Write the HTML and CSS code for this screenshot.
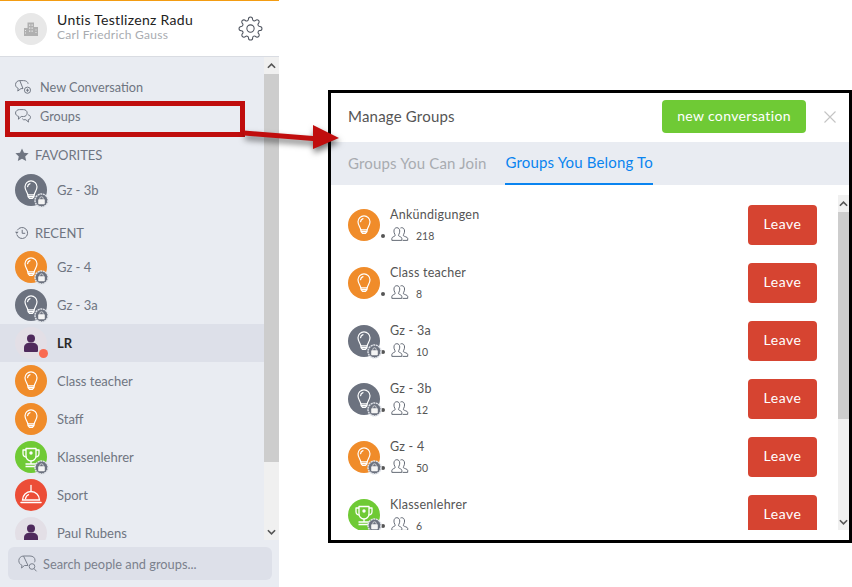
FILE: index.html
```html
<!DOCTYPE html>
<html lang="en">
<head>
<meta charset="utf-8">
<title>Manage Groups</title>
<link rel="stylesheet" href="styles.css">
</head>
<body>
<svg class="defs" width="0" height="0" aria-hidden="true">
  <symbol id="bulb" viewBox="0 0 32 32">
    <g fill="none" stroke="#fff" stroke-width="1.2" stroke-linejoin="round" stroke-linecap="round">
      <path d="M12.800 20.800C12.400 18.200 10 16.400 10 12.800a6 6 0 0 1 12 0c0 3.600-2.400 5.400-2.800 8z"/>
      <path d="M13 20.800v1.800l1.500 1.800h3l1.500-1.800v-1.800M13.200 22.600h5.600"/>
      <path d="M12.600 12.600a3.400 3.400 0 0 1 2.400-3"/>
    </g>
  </symbol>
  <symbol id="trophy" viewBox="0 0 32 32">
    <g fill="none" stroke="#fff" stroke-width="1.3" stroke-linejoin="round">
      <path d="M11 7.500h10v7.500a5 5 0 0 1-10 0z"/>
      <path d="M11 9H8v3.500a3.500 3.500 0 0 0 3.400 3.500M21 9h3v3.500a3.500 3.500 0 0 1-3.400 3.500"/>
      <path d="M16 20v2.500M10.500 23h11M10.500 25.500h11"/>
    </g>
    <circle cx="16" cy="12" r="1.700" fill="#fff"/>
  </symbol>
  <symbol id="cloche" viewBox="0 0 32 32">
    <g fill="none" stroke="#fff" stroke-width="1.3" stroke-linecap="round">
      <path d="M7.500 21a8.500 8.500 0 0 1 17 0z"/>
      <path d="M6 23.400h20" stroke-width="1.500"/>
      <path d="M16 12.500V6.500"/>
      <path d="M10.500 19.500a5.500 5.500 0 0 1 3-3.800"/>
    </g>
  </symbol>
  <symbol id="person" viewBox="0 0 32 32">
    <circle cx="16" cy="11.500" r="4" fill="#4f2a5c"/>
    <path d="M9 24v-3.500c0-3 2.500-4.500 4.500-4.800h5c2 .3 4.500 1.800 4.500 4.800V24a1 1 0 0 1-1 1H10a1 1 0 0 1-1-1z" fill="#4f2a5c"/>
  </symbol>
  <symbol id="lock" viewBox="0 0 15 15">
    <circle cx="7.500" cy="7.500" r="6.500" fill="#6c727f" stroke="#dfe2e8" stroke-width="1.500" stroke-dasharray="2 .6"/>
    <rect x="4.200" y="6.300" width="6.600" height="5" rx=".7" fill="#f4f4f4"/>
    <path d="M5.800 6.500V5.500a1.700 1.700 0 0 1 3.400 0v1" fill="none" stroke="#f4f4f4" stroke-width=".7"/>
  </symbol>
  <symbol id="people" viewBox="0 0 20 16">
    <g fill="none" stroke="#5f6570" stroke-width="1.100" stroke-linejoin="round">
      <path d="M.7 15.300v-2.400c0-1.400 2.900-2 3.700-2.900.3-.5.100-1-.3-1.600C3.400 7.300 3.100 6 3.100 4.600 3.100 2.300 4.500.8 6.400.8s3.300 1.500 3.300 3.800c0 1.400-.3 2.700-1 3.800-.4.600-.6 1.100-.3 1.600.8.900 3.700 1.500 3.700 2.900v2.400z"/>
      <path d="M10.500 1.200c.4-.3.900-.4 1.500-.4 1.900 0 3.200 1.500 3.200 3.800 0 1.400-.3 2.700-1 3.800-.4.600-.6 1.100-.3 1.600.8.900 4.900 1.500 4.900 2.900v2.400h-5.800"/>
    </g>
  </symbol>
  <symbol id="chat-plus" viewBox="0 0 15 13">
    <g fill="none" stroke="#6f7581" stroke-width=".9">
      <path d="M4.500.5h3.500c2.400 0 4.100 1.200 4.300 3M7.500 8H5.600L2.600 10.300l.4-2.500C1.500 7.200.5 6 .5 4.300.5 2 2.300.5 4.500.5z"/>
      <circle cx="11.700" cy="9.500" r="2.900"/>
      <path d="M11.700 8v3M10.200 9.500h3"/>
    </g>
  </symbol>
  <symbol id="chat-double" viewBox="0 0 15 13">
    <g fill="none" stroke="#6f7581" stroke-width=".9">
      <path d="M4.300.5h3.600c2 0 3.500 1.300 3.500 3.200S9.900 7 8 7H5.800L3.200 9.500l.3-2.600C1.800 6.500.5 5.300.5 3.700.5 1.900 2.200.5 4.300.5z"/>
      <path d="M12.300 5.400c1.300.3 2.200 1 2.200 2.300 0 1.200-.9 2.200-2.100 2.300l.2 2.200-2.400-2.200H8L6.800 9"/>
    </g>
  </symbol>
  <symbol id="chat-search" viewBox="0 0 20 18">
    <g fill="none" stroke="#7b818d" stroke-width="1">
      <path d="M5.500 1h6.500c3 0 5 1.700 5 4.200 0 .8-.2 1.500-.6 2.100M10 10.500H6.500l-3 2.500.5-2.700C2.200 9.700.8 7.800.8 5.600.8 3 3 1 5.500 1z"/>
      <circle cx="14" cy="11.500" r="2.800"/>
      <path d="M16 13.600l2.500 2.700"/>
    </g>
  </symbol>
</svg>

<div class="app">
  <aside class="sidebar">
    <header class="profile">
      <div class="avatar org">
        <svg class="org-icon" viewBox="0 0 16 16">
          <path d="M1 7h3.500v8H1zM4.500 1.500h6.500V15H4.500zM11 6h4v9h-4z" fill="#b0b0b0"/>
          <path d="M6 3.500h1.300v1.300H6zM8.500 3.500h1.300v1.300H8.500zM6 6.500h1.300v1.300H6zM8.500 6.500h1.300v1.300H8.500zM6 9.500h1.300v1.300H6zM8.500 9.500h1.300v1.300H8.500zM2 9h1v1H2zM2 11.500h1v1H2zM12.500 8.500h1v1h-1zM12.500 11h1v1h-1z" fill="#e8e8e8"/>
        </svg>
      </div>
      <div class="profile-text">
        <div class="profile-name">Untis Testlizenz Radu</div>
        <div class="profile-sub">Carl Friedrich Gauss</div>
      </div>
      <svg class="gear" viewBox="0 0 24 24" fill="none" stroke="#4d535e" stroke-width="1">
        <circle cx="12" cy="12" r="3.500"/>
        <path d="M19.400 15a1.650 1.650 0 0 0 .33 1.820l.06.06a2 2 0 0 1 0 2.830 2 2 0 0 1-2.830 0l-.06-.06a1.650 1.650 0 0 0-1.820-.33 1.650 1.650 0 0 0-1 1.510V21a2 2 0 0 1-2 2 2 2 0 0 1-2-2v-.09A1.650 1.650 0 0 0 9 19.400a1.650 1.650 0 0 0-1.820.33l-.06.06a2 2 0 0 1-2.830 0 2 2 0 0 1 0-2.830l.06-.06a1.650 1.650 0 0 0 .33-1.820 1.650 1.650 0 0 0-1.510-1H3a2 2 0 0 1-2-2 2 2 0 0 1 2-2h.09A1.650 1.650 0 0 0 4.600 9a1.650 1.650 0 0 0-.33-1.820l-.06-.06a2 2 0 0 1 0-2.830 2 2 0 0 1 2.830 0l.06.06a1.650 1.650 0 0 0 1.820.33H9a1.650 1.650 0 0 0 1-1.510V3a2 2 0 0 1 2-2 2 2 0 0 1 2 2v.09a1.650 1.650 0 0 0 1 1.510 1.650 1.650 0 0 0 1.820-.33l.06-.06a2 2 0 0 1 2.830 0 2 2 0 0 1 0 2.830l-.06.06a1.650 1.650 0 0 0-.33 1.820V9a1.650 1.650 0 0 0 1.510 1H21a2 2 0 0 1 2 2 2 2 0 0 1-2 2h-.09a1.650 1.650 0 0 0-1.510 1z"/>
      </svg>
    </header>

    <div class="side-middle">
      <nav class="side-list">
        <a class="nav-row"><svg class="nav-icon"><use href="#chat-plus"/></svg>New Conversation</a>
        <a class="nav-row"><svg class="nav-icon"><use href="#chat-double"/></svg>Groups</a>

        <div class="section-head head-fav">
          <svg class="head-icon" viewBox="0 0 14 14"><path d="M7 .5l2 4.200 4.600.6-3.400 3.100 1 4.600L7 10.700l-4.200 2.300 1-4.600L.4 5.300 5 4.700z" fill="#6f7581"/></svg>
          FAVORITES
        </div>
        <div class="conv"><div class="avatar slate"><svg class="glyph"><use href="#bulb"/></svg><svg class="lock"><use href="#lock"/></svg></div><span>Gz - 3b</span></div>

        <div class="section-head head-recent">
          <svg class="head-icon" viewBox="0 0 14 14" fill="none" stroke="#6f7581" stroke-width="1"><path d="M2.300 4.300A5.500 5.500 0 1 1 1.800 8.500"/><path d="M7.200 3.800v3.500h3"/><path d="M0 5.800h3.600L1.800 8z" fill="#6f7581" stroke="none"/></svg>
          RECENT
        </div>
        <div class="conv"><div class="avatar orange"><svg class="glyph"><use href="#bulb"/></svg><svg class="lock"><use href="#lock"/></svg></div><span>Gz - 4</span></div>
        <div class="conv"><div class="avatar slate"><svg class="glyph"><use href="#bulb"/></svg><svg class="lock"><use href="#lock"/></svg></div><span>Gz - 3a</span></div>
        <div class="conv active"><div class="avatar user"><svg class="glyph"><use href="#person"/></svg><i class="status"></i></div><span>LR</span></div>
        <div class="conv"><div class="avatar orange"><svg class="glyph"><use href="#bulb"/></svg></div><span>Class teacher</span></div>
        <div class="conv"><div class="avatar orange"><svg class="glyph"><use href="#bulb"/></svg></div><span>Staff</span></div>
        <div class="conv"><div class="avatar green"><svg class="glyph"><use href="#trophy"/></svg><svg class="lock"><use href="#lock"/></svg></div><span>Klassenlehrer</span></div>
        <div class="conv"><div class="avatar red"><svg class="glyph"><use href="#cloche"/></svg></div><span>Sport</span></div>
        <div class="conv"><div class="avatar user"><svg class="glyph"><use href="#person"/></svg></div><span>Paul Rubens</span></div>
      </nav>
      <div class="scrollbar side-scroll">
        <div class="sb-btn"><svg viewBox="0 0 10 6"><path d="M1 5l4-4 4 4" fill="none" stroke="#555" stroke-width="1.800"/></svg></div>
        <div class="sb-thumb"></div>
        <div class="sb-rest"></div>
        <div class="sb-btn"><svg viewBox="0 0 10 6"><path d="M1 1l4 4 4-4" fill="none" stroke="#555" stroke-width="1.800"/></svg></div>
      </div>
    </div>

    <div class="search-wrap">
      <div class="search"><svg class="search-icon"><use href="#chat-search"/></svg>Search people and groups...</div>
    </div>
  </aside>

  <main class="stage">
    <section class="modal">
      <header class="modal-head">
        <h1>Manage Groups</h1>
        <button class="new-btn">new conversation</button>
        <svg class="close" viewBox="0 0 12 12"><path d="M.5.500l11 11M11.500.500l-11 11" stroke="#c4c4c4" stroke-width="1.100"/></svg>
      </header>
      <div class="tabs">
        <span class="tab">Groups You Can Join</span>
        <span class="tab current">Groups You Belong To</span>
      </div>
      <div class="modal-body">
        <div class="group-list">
          <div class="group"><div class="avatar orange"><svg class="glyph"><use href="#bulb"/></svg></div><i class="dot"></i><div class="group-info"><div class="group-name">Ankündigungen</div><div class="group-count"><svg class="people"><use href="#people"/></svg>218</div></div><button class="leave">Leave</button></div>
          <div class="group"><div class="avatar orange"><svg class="glyph"><use href="#bulb"/></svg></div><i class="dot"></i><div class="group-info"><div class="group-name">Class teacher</div><div class="group-count"><svg class="people"><use href="#people"/></svg>8</div></div><button class="leave">Leave</button></div>
          <div class="group"><div class="avatar slate"><svg class="glyph"><use href="#bulb"/></svg><svg class="lock"><use href="#lock"/></svg></div><i class="dot"></i><div class="group-info"><div class="group-name">Gz - 3a</div><div class="group-count"><svg class="people"><use href="#people"/></svg>10</div></div><button class="leave">Leave</button></div>
          <div class="group"><div class="avatar slate"><svg class="glyph"><use href="#bulb"/></svg><svg class="lock"><use href="#lock"/></svg></div><i class="dot"></i><div class="group-info"><div class="group-name">Gz - 3b</div><div class="group-count"><svg class="people"><use href="#people"/></svg>12</div></div><button class="leave">Leave</button></div>
          <div class="group"><div class="avatar orange"><svg class="glyph"><use href="#bulb"/></svg><svg class="lock"><use href="#lock"/></svg></div><i class="dot"></i><div class="group-info"><div class="group-name">Gz - 4</div><div class="group-count"><svg class="people"><use href="#people"/></svg>50</div></div><button class="leave">Leave</button></div>
          <div class="group"><div class="avatar green"><svg class="glyph"><use href="#trophy"/></svg><svg class="lock"><use href="#lock"/></svg></div><i class="dot"></i><div class="group-info"><div class="group-name">Klassenlehrer</div><div class="group-count"><svg class="people"><use href="#people"/></svg>6</div></div><button class="leave">Leave</button></div>
        </div>
        <div class="scrollbar modal-scroll">
          <div class="sb-btn"><svg viewBox="0 0 10 6"><path d="M1 5l4-4 4 4" fill="none" stroke="#555" stroke-width="1.800"/></svg></div>
          <div class="sb-thumb"></div>
          <div class="sb-rest"></div>
          <div class="sb-btn"><svg viewBox="0 0 10 6"><path d="M1 1l4 4 4-4" fill="none" stroke="#555" stroke-width="1.800"/></svg></div>
        </div>
      </div>
    </section>
  </main>
</div>

<div class="callout-box"></div>
<svg class="callout-arrow" viewBox="0 0 110 40">
  <path d="M0 5.500L69 11V0L95 13 69 24V16L0 10.500z" fill="#c00d0d"/>
</svg>
</body>
</html>
```
FILE: styles.css
```css
* { box-sizing: border-box; }
html, body { margin: 0; height: 100%; }
body {
  width: 852px;
  height: 587px;
  overflow: hidden;
  position: relative;
  background: #fff;
  font-family: "Lato", "Liberation Sans", sans-serif;
  color: #6f7581;
}
.defs { position: absolute; }
.app { display: flex; height: 587px; }

/* Sidebar */
.sidebar {
  width: 279px;
  flex: none;
  display: flex;
  flex-direction: column;
  background: #e9ecf2;
  border-top: 1px solid #f39c12;
}
.profile {
  height: 56px;
  flex: none;
  display: flex;
  align-items: center;
  padding: 0 16px 0 15px;
  background: #fff;
  border-bottom: 1px solid #d9dce2;
}
.profile-text { flex: 1; margin: 0 0 5px 10px; }
.profile-name { font-size: 14px; line-height: 17px; color: #222; letter-spacing: .3px; }
.profile-sub { font-size: 12px; line-height: 14px; color: #a8abb0; letter-spacing: .3px; }
.gear { width: 25px; height: 25px; flex: none; }
.org-icon { width: 16px; height: 16px; }

.avatar {
  position: relative;
  width: 32px;
  height: 32px;
  flex: none;
  border-radius: 50%;
  display: flex;
  align-items: center;
  justify-content: center;
}
.org { background: #e8e8e8; }
.orange { background: #f08c2a; }
.slate { background: #6c727f; }
.green { background: #6fca35; }
.red { background: #ec4d37; }
.user { background: #e3dfe6; }
.glyph { width: 32px; height: 32px; display: block; }
.lock { position: absolute; right: -2px; bottom: -2px; width: 15px; height: 15px; }
.status {
  position: absolute;
  right: -1px;
  bottom: 1px;
  width: 9px;
  height: 9px;
  border-radius: 50%;
  background: #f96a50;
}

.side-middle { height: 483px; flex: none; display: flex; }
.side-list { flex: 1; min-width: 0; overflow: hidden; padding-top: 15px; }
.nav-row {
  height: 29px;
  display: flex;
  align-items: center;
  padding-left: 15px;
  font-size: 12.700px;
  color: #6f7581;
}
.nav-icon { width: 16px; height: 14px; margin-right: 9px; flex: none; }
.section-head {
  height: 24px;
  display: flex;
  align-items: center;
  padding-left: 15px;
  font-size: 13px;
  letter-spacing: -.05px;
  color: #6f7581;
}
.head-fav { margin-top: 13px; margin-bottom: 4px; }
.head-recent { margin-top: 12px; margin-bottom: 3px; }
.head-icon { width: 14px; height: 14px; margin-right: 6px; flex: none; }
.conv {
  height: 38px;
  display: flex;
  align-items: center;
  padding-left: 15px;
  font-size: 13px;
  color: #6f7581;
}
.conv span { margin-left: 10px; }
.active { background: #dde0e9; }
.active span { color: #2a2a2a; font-weight: 700; }

.scrollbar { flex: none; display: flex; flex-direction: column; background: #f0f0f0; }
.side-scroll { width: 15px; }
.sb-btn { height: 17px; flex: none; display: flex; align-items: center; justify-content: center; }
.sb-btn svg { width: 9px; height: 6px; }
.sb-thumb { background: #cdcdcd; }
.sb-rest { flex: 1; }
.side-scroll .sb-thumb { height: 388px; }

.search-wrap { flex: 1; padding: 7px 7px 7px 8px; }
.search {
  height: 33px;
  display: flex;
  align-items: center;
  padding-left: 10px;
  border-radius: 6px;
  background: #dde0e9;
  font-size: 12.800px;
  color: #7b818d;
}
.search-icon { width: 20px; height: 18px; margin-right: 5px; flex: none; }

/* Modal */
.stage { flex: 1; padding: 90px 0 44px 49px; min-width: 0; }
.modal {
  height: 453px;
  display: flex;
  flex-direction: column;
  border: 3px solid #000;
  background: #fff;
}
.modal-head {
  height: 49px;
  flex: none;
  display: flex;
  align-items: center;
  padding: 0 13px 2px 17px;
}
.modal-head h1 {
  flex: 1;
  margin: 0 0 1px;
  font-size: 15px;
  font-weight: 400;
  color: #555;
  letter-spacing: .2px;
}
.new-btn {
  width: 144px;
  height: 33px;
  padding: 0 0 3px;
  border: 0;
  border-radius: 4px;
  background: #6fca35;
  color: #fff;
  font: 400 14px "Lato", "Liberation Sans", sans-serif;
  letter-spacing: .35px;
}
.close { width: 12px; height: 12px; margin-left: 18px; flex: none; }
.tabs {
  height: 43px;
  flex: none;
  display: flex;
  gap: 19px;
  padding-left: 17px;
  background: #e9ecf2;
}
.tab {
  display: flex;
  align-items: center;
  padding-bottom: 1px;
  font-size: 15px;
  color: #a8abb0;
  letter-spacing: .17px;
}
.current { color: #0a84f0; border-bottom: 2px solid #0a84f0; }
.modal-body { flex: 1; min-height: 0; display: flex; padding-bottom: 10px; }
.group-list { flex: 1; min-width: 0; overflow: hidden; padding: 20px 21px 0 17px; }
.group { position: relative; height: 58px; display: flex; align-items: flex-start; padding-top: 4px; }
.dot { width: 4px; height: 4px; margin: 25px 5px 0 1px; border-radius: 50%; background: #555; flex: none; }
.group-info { flex: 1; margin-top: -2px; }
.group-name { font-size: 12.500px; line-height: 16px; color: #555; letter-spacing: .25px; }
.group-count { display: flex; align-items: flex-start; margin-top: 4px; height: 14px; font-size: 10.500px; line-height: 19px; color: #555; padding-left: 1px; }
.people { width: 18px; height: 14px; margin-right: 7px; flex: none; }
.leave {
  width: 69px;
  height: 40px;
  margin-top: -4px;
  padding: 0 0 3px;
  border: 0;
  border-radius: 4px;
  background: #d64431;
  color: #fff;
  font: 400 14px "Lato", "Liberation Sans", sans-serif;
  letter-spacing: .5px;
}
.modal-scroll { width: 11px; margin-top: 10px; }
.modal-scroll .sb-thumb { height: 207px; }

/* Annotation overlays */
.callout-box {
  position: absolute;
  left: 5px;
  top: 101px;
  width: 240px;
  height: 36px;
  border: 5px solid #c00d0d;
}
.callout-arrow {
  position: absolute;
  left: 244px;
  top: 125px;
  width: 110px;
  height: 40px;
  filter: drop-shadow(1px 4px 3px rgba(0, 0, 0, .55));
}
```
